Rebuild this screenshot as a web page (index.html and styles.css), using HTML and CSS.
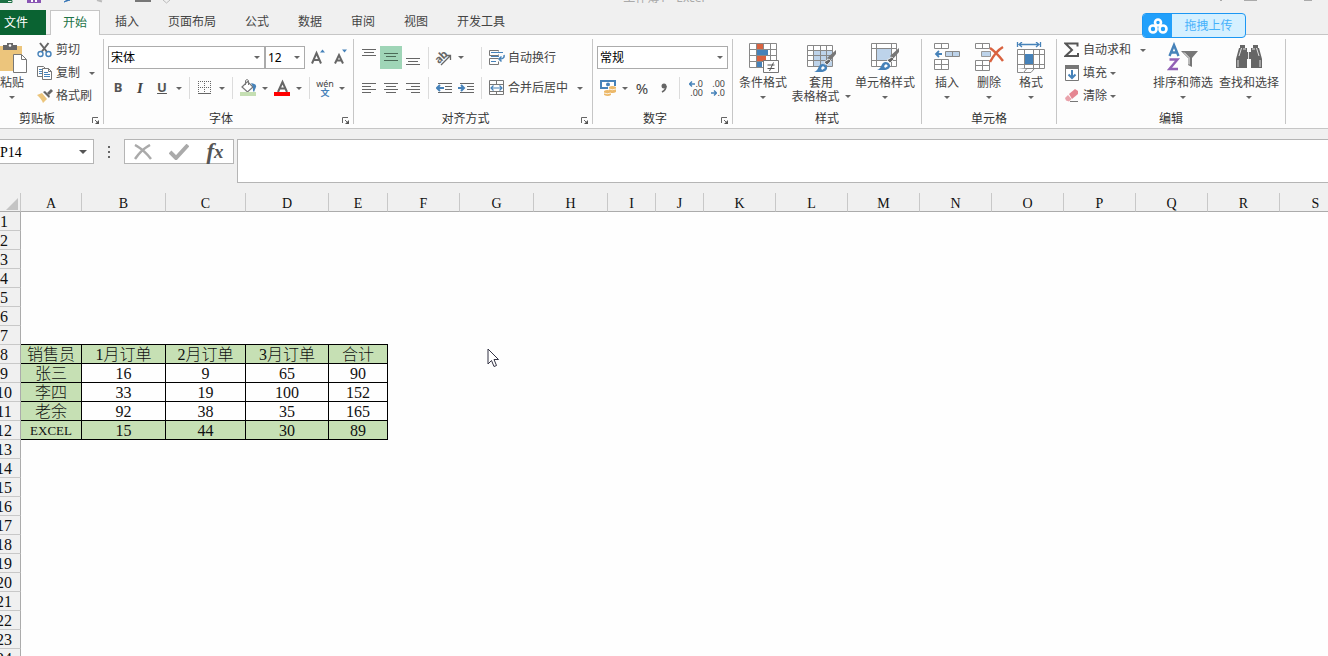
FILE: index.html
```html
<!DOCTYPE html>
<html lang="zh-CN">
<head>
    <meta charset="UTF-8">
    <meta name="viewport" content="width=device-width, initial-scale=1.0">
    <title>工作簿1 - Excel</title>
    <link rel="stylesheet" href="styles.css">
</head>
<body>
    <!-- Shared icons -->
    <svg class="symbols" aria-hidden="true">
        <symbol id="caret" viewBox="0 0 6 3"><path d="M0 0h6L3 3z" fill="#666"/></symbol>
        <symbol id="launch" viewBox="0 0 7 7"><path d="M.5 6V.5H6M3 3l3 3" fill="none" stroke="#666"/><path d="M7 3v4H3z" fill="#555"/></symbol>
        <symbol id="brush" viewBox="0 0 23 24">
            <path d="M22 0v4l-6 7-3-3z" fill="#777"/><path d="M15 9l2 2-4 4-3-3z" fill="#666" stroke="#fff" stroke-width=".7"/>
            <path d="M0 22c4-1 4-5 6-7s6-1 7 2-3 5-6 5z" fill="#4682b9"/><path d="M7 18l2-2 2 2-3 2z" fill="#fff"/>
        </symbol>
    </svg>

    <!-- Title bar -->
    <header class="titlebar">
        <div class="quick">
            <svg width="180" height="8" viewBox="0 0 180 8">
                <path d="M0 0h8v3H0z" fill="#1d7044"/><path d="M8 .5h4v2H8" fill="none" stroke="#1d7044"/>
                <path d="M27 0h14v3H27z" fill="#8a55b4"/><path d="M31 0h6v2h-6z" fill="#fff"/><path d="M33 0h2v2h-2z" fill="#8a55b4"/>
                <path d="M64 2l6-2h-3z" stroke="#3f7fc0"/><path d="M97 0l5 1.500" stroke="#bbb" stroke-width="2"/>
                <path d="M135 0h16v2h-16z" fill="#777"/><path d="M163 0l3.500 3L170 0" fill="none" stroke="#bbb"/>
            </svg>
        </div>
        <span class="doc-name">工作簿1 - Excel</span>
        <svg class="window-icons" width="108" height="8" viewBox="0 0 108 8"><path d="M0 .5h2M24 .5h13M84 .5h8" stroke="#aaa"/></svg>
    </header>

    <!-- Ribbon tabs -->
    <nav class="tabs">
        <button class="tab file">文件</button>
        <button class="tab active">开始</button>
        <button class="tab">插入</button>
        <button class="tab">页面布局</button>
        <button class="tab">公式</button>
        <button class="tab">数据</button>
        <button class="tab">审阅</button>
        <button class="tab">视图</button>
        <button class="tab">开发工具</button>
    </nav>

    <!-- Ribbon -->
    <div class="ribbon">
        <section class="group clipboard">
            <div class="group-body">
                <button class="big paste">
                    <svg width="32" height="32" viewBox="0 0 32 32">
                        <path d="M0 4h26v25H0z" fill="#ecc57c"/><path d="M7 3h4V1h6v2h4v5H7z" fill="#666"/><circle cx="14" cy="3.500" r="1.300" fill="#fff"/>
                        <path d="M17.500 12.500h8l5 5v13h-13z" fill="#fff" stroke="#777"/><path d="M25.500 12.500v5h5" fill="none" stroke="#777"/>
                    </svg>
                    <span>粘贴</span>
                    <svg class="caret"><use href="#caret"/></svg>
                </button>
                <div class="stack">
                    <button class="small">
                        <svg width="16" height="16" viewBox="0 0 16 16"><path d="M3 1l7 9M11.500 1l-7 9" stroke="#666" stroke-width="2"/><circle cx="3.500" cy="12" r="2.500" fill="none" stroke="#4682b9" stroke-width="1.400"/><circle cx="11.500" cy="12" r="2.500" fill="none" stroke="#4682b9" stroke-width="1.400"/></svg>
                        <span>剪切</span>
                    </button>
                    <button class="small">
                        <svg width="16" height="16" viewBox="0 0 16 16"><path d="M.5 1.500h6l2 2v8h-8z" fill="#fff" stroke="#777"/><path d="M2 4.500h4M2 6.500h4M2 8.500h4" stroke="#4682b9"/><path d="M5.500 3.500h6l3 3v8h-9z" fill="#fff" stroke="#777"/><path d="M11.500 3.500v3h3" fill="none" stroke="#777"/><path d="M7 7.500h4M7 9.500h6M7 11.500h6" stroke="#4682b9"/></svg>
                        <span>复制</span>
                        <svg class="caret far"><use href="#caret"/></svg>
                    </button>
                    <button class="small">
                        <svg width="16" height="16" viewBox="0 0 16 16"><path d="M0 7l5-2 5 6-4 4c-1-3-3-5-6-8z" fill="#ecc57c"/><path d="M6 4l6 6 1-2-5-5z" fill="#666"/><path d="M10 5l4-4 2 2-4 4z" fill="#666"/></svg>
                        <span>格式刷</span>
                    </button>
                </div>
            </div>
            <footer class="group-foot"><span>剪贴板</span><button class="launch" aria-label="剪贴板设置"><svg width="7" height="7"><use href="#launch"/></svg></button></footer>
        </section>

        <section class="group font">
            <div class="group-body rows">
                <div class="row">
                    <div class="combo font-name"><select aria-label="字体"><option>宋体</option></select><svg class="caret"><use href="#caret"/></svg></div>
                    <div class="combo font-size"><select aria-label="字号"><option>12</option></select><svg class="caret"><use href="#caret"/></svg></div>
                    <button class="tool" aria-label="增大字号"><svg width="16" height="18" viewBox="0 0 16 18"><path d="M2 14.500L6.500 4 11 14.500M3.500 11h6" fill="none" stroke="#666" stroke-width="2"/><path d="M10 3.500l2.500-3 2.500 3z" fill="#4682b9"/></svg></button>
                    <button class="tool" aria-label="减小字号"><svg width="16" height="18" viewBox="0 0 16 18"><path d="M3 14.500L7 6l4 8.500M4.500 11.500h5" fill="none" stroke="#666" stroke-width="2"/><path d="M10 .5h5l-2.500 3z" fill="#4682b9"/></svg></button>
                </div>
                <div class="row">
                    <button class="tool bold">B</button>
                    <button class="tool italic">I</button>
                    <button class="tool underline">U</button>
                    <button class="drop" aria-label="下划线选项"><svg class="caret"><use href="#caret"/></svg></button>
                    <i class="sep"></i>
                    <button class="tool" aria-label="边框"><svg width="14" height="14" viewBox="0 0 14 14"><path d="M0 .5h13M0 6.500h13M.5 0v12M6.500 0v12M12.500 0v12" stroke="#666" stroke-dasharray="1 1"/><path d="M0 12.500h13" stroke="#666"/></svg></button>
                    <button class="drop" aria-label="边框选项"><svg class="caret"><use href="#caret"/></svg></button>
                    <i class="sep"></i>
                    <button class="tool" aria-label="填充颜色"><svg width="18" height="18" viewBox="0 0 18 18"><path d="M3 8l5.500-5.500L14 8l-5.500 5z" fill="#fff" stroke="#777" stroke-width="1.200"/><path d="M6.500 6V1.500q1.500-2 3 0V6" fill="none" stroke="#777"/><path d="M12 4q6 1 5 4l-2 5q-1.500 0-1-5z" fill="#4682b9"/><path d="M1 13h16v4H1z" fill="#c5dfb3"/></svg></button>
                    <button class="drop" aria-label="填充颜色选项"><svg class="caret"><use href="#caret"/></svg></button>
                    <button class="tool" aria-label="字体颜色"><svg width="16" height="18" viewBox="0 0 16 18"><path d="M4 13L8.500 3 13 13M5.500 9.500h6" fill="none" stroke="#666" stroke-width="2"/><path d="M0 13h16v4H0z" fill="#f00"/></svg></button>
                    <button class="drop" aria-label="字体颜色选项"><svg class="caret"><use href="#caret"/></svg></button>
                    <i class="sep"></i>
                    <button class="tool pinyin"><span>wén</span><b>文</b></button>
                    <button class="drop" aria-label="拼音选项"><svg class="caret"><use href="#caret"/></svg></button>
                </div>
            </div>
            <footer class="group-foot"><span>字体</span><button class="launch" aria-label="字体设置"><svg width="7" height="7"><use href="#launch"/></svg></button></footer>
        </section>

        <section class="group align">
            <div class="group-body rows">
                <div class="row">
                    <button class="tool" aria-label="顶端对齐"><svg width="14" height="19" viewBox="0 0 14 19"><path d="M0 1.500h14M2 4.500h10M0 7.500h14" stroke="#666"/></svg></button>
                    <button class="tool pressed" aria-label="垂直居中"><svg width="14" height="19" viewBox="0 0 14 19"><path d="M0 5.500h14M2 8.500h10M0 12.500h14" stroke="#4b6b58"/></svg></button>
                    <button class="tool" aria-label="底端对齐"><svg width="14" height="19" viewBox="0 0 14 19"><path d="M0 10.500h14M2 13.500h10M0 16.500h14" stroke="#666"/></svg></button>
                    <i class="sep"></i>
                    <div class="pair">
                        <button class="tool" aria-label="方向"><svg width="18" height="18" viewBox="0 0 18 18"><text x="0" y="12" transform="rotate(-45 6 9)" class="ab">ab</text><path d="M6 16l9-9M11 6.500h4.500V11" fill="none" stroke="#666" stroke-width="1.300"/></svg></button>
                        <button class="drop" aria-label="方向选项"><svg class="caret"><use href="#caret"/></svg></button>
                    </div>
                    <i class="sep"></i>
                    <button class="small">
                        <svg width="16" height="16" viewBox="0 0 16 16"><path d="M9.500 1.500v-1h-9v5h9v-1M9.500 8.500h-9v6h9v-3" fill="none" stroke="#777"/><path d="M2 2.500h12M2 6.500h8M2 11.500h5" stroke="#4682b9"/><path d="M15 5q1 4-5 4M12.500 6.500L10 9l2.500 2.500" fill="none" stroke="#4682b9" stroke-width="1.500"/></svg>
                        <span>自动换行</span>
                    </button>
                </div>
                <div class="row">
                    <button class="tool" aria-label="左对齐"><svg width="14" height="12" viewBox="0 0 14 12"><path d="M0 1.500h14M0 4.500h9M0 7.500h14M0 10.500h9" stroke="#666"/></svg></button>
                    <button class="tool" aria-label="居中"><svg width="14" height="12" viewBox="0 0 14 12"><path d="M0 1.500h14M2 4.500h10M0 7.500h14M2 10.500h10" stroke="#666"/></svg></button>
                    <button class="tool" aria-label="右对齐"><svg width="14" height="12" viewBox="0 0 14 12"><path d="M0 1.500h14M5 4.500h9M0 7.500h14M5 10.500h9" stroke="#666"/></svg></button>
                    <i class="sep"></i>
                    <div class="pair">
                        <button class="tool" aria-label="减少缩进"><svg width="16" height="12" viewBox="0 0 16 12"><path d="M2 1.500h14M9 4.500h7M9 7.500h7M2 10.500h14" stroke="#666"/><path d="M8 6H1M4 3L1 6l3 3" fill="none" stroke="#4682b9" stroke-width="2"/></svg></button>
                        <button class="tool" aria-label="增加缩进"><svg width="16" height="12" viewBox="0 0 16 12"><path d="M2 1.500h14M9 4.500h7M9 7.500h7M2 10.500h14" stroke="#666"/><path d="M0 6h6M3 3l3 3-3 3" fill="none" stroke="#4682b9" stroke-width="2"/></svg></button>
                    </div>
                    <i class="sep"></i>
                    <button class="small">
                        <svg width="16" height="16" viewBox="0 0 16 16"><path d="M.5.5h14v14H.5zM.5 4.500h14M.5 11.500h14M7.500.5v4M7.500 11.500v3" fill="none" stroke="#777"/><path d="M2 8h11M4.500 5.500L2 8l2.500 2.500M10.500 5.500L13 8l-2.500 2.500" fill="none" stroke="#4682b9" stroke-width="1.200"/></svg>
                        <span>合并后居中</span>
                        <svg class="caret far"><use href="#caret"/></svg>
                    </button>
                </div>
            </div>
            <footer class="group-foot"><span>对齐方式</span><button class="launch" aria-label="对齐设置"><svg width="7" height="7"><use href="#launch"/></svg></button></footer>
        </section>

        <section class="group number">
            <div class="group-body rows">
                <div class="row">
                    <div class="combo number-format"><select aria-label="数字格式"><option>常规</option></select><svg class="caret"><use href="#caret"/></svg></div>
                </div>
                <div class="row">
                    <button class="tool" aria-label="会计数字格式"><svg width="16" height="16" viewBox="0 0 16 16"><path d="M0 0h16v9H0z" fill="#4682b9"/><path d="M2 2h12v5H2z" fill="#fff"/><circle cx="8" cy="4.500" r="2" fill="#4682b9"/><path d="M8 6h8v7H8zM3 10h9v6H3z" fill="#fff"/><path d="M9 7q3-2 7 0v5q-3 2-7 0zM4 11q3-2 7 0v4q-3 2-7 0z" fill="#ecb96a"/><path d="M9 9q3 1.500 7 0M4 13q3 1.500 7 0" fill="none" stroke="#fff" stroke-width=".8"/></svg></button>
                    <button class="drop" aria-label="会计格式选项"><svg class="caret"><use href="#caret"/></svg></button>
                    <button class="tool percent">%</button>
                    <button class="tool" aria-label="千位分隔样式"><svg width="8" height="12" viewBox="0 0 8 12"><circle cx="4" cy="4" r="2.500" fill="#666"/><path d="M6 4q0 4-4 6" fill="none" stroke="#666" stroke-width="1.600"/></svg></button>
                    <i class="sep"></i>
                    <button class="tool decimals"><span><svg width="6" height="6" viewBox="0 0 6 6"><path d="M6 3H1M3 .5L.5 3 3 5.500" fill="none" stroke="#4682b9" stroke-width="1.400"/></svg>.0</span><span>.00</span></button>
                    <button class="tool decimals"><span>.00</span><span><svg width="6" height="6" viewBox="0 0 6 6"><path d="M0 3h5M3 .5L5.500 3 3 5.500" fill="none" stroke="#4682b9" stroke-width="1.400"/></svg>.0</span></button>
                </div>
            </div>
            <footer class="group-foot"><span>数字</span><button class="launch" aria-label="数字设置"><svg width="7" height="7"><use href="#launch"/></svg></button></footer>
        </section>

        <section class="group styles">
            <div class="group-body">
                <button class="big">
                    <svg width="32" height="32" viewBox="0 0 32 32">
                        <path d="M2.500 1.500h27v24h-27zM2.500 7.500h27M2.500 13.500h27M2.500 19.500h27M9.500 1.500v24M16.500 1.500v24M23.500 1.500v24" fill="#fff" stroke="#888"/>
                        <path d="M10 2h6v5h-6zM10 14h9v5h-9z" fill="#d9623f"/><path d="M10 8h11v5H10zM10 20h5v5h-5z" fill="#4682b9"/>
                        <path d="M16.500 18.500h15v12h-15z" fill="#fff" stroke="#777"/><path d="M20.500 23h7M20.500 26.500h7M26.500 20.500l-4 8.500" stroke="#555" fill="none"/>
                    </svg>
                    <span>条件格式</span>
                    <svg class="caret"><use href="#caret"/></svg>
                </button>
                <button class="big">
                    <svg width="32" height="32" viewBox="0 0 32 32">
                        <path d="M2.500 3.500h25v21h-25z" fill="#fff"/><path d="M9 9h18v15H9z" fill="#bdd3ea"/>
                        <path d="M2.500 3.500h25v21h-25zM2.500 8.500h25M2.500 13.500h25M2.500 18.500h25M8.500 3.500v21M15.500 3.500v21M21.500 3.500v21" fill="none" stroke="#888"/>
                        <use href="#brush" x="9" y="8" width="23" height="24"/>
                    </svg>
                    <span>套用</span>
                    <span class="with-caret">表格格式<svg class="caret"><use href="#caret"/></svg></span>
                </button>
                <button class="big wide">
                    <svg width="32" height="32" viewBox="0 0 32 32">
                        <path d="M2.500 1.500h25v23h-25zM2.500 6.500h25M2.500 18.500h25M7.500 1.500v23M22.500 1.500v23" fill="#fff" stroke="#888"/>
                        <path d="M8 7h14v11H8z" fill="#bdd3ea"/>
                        <use href="#brush" x="8" y="6" width="23" height="24"/>
                    </svg>
                    <span>单元格样式</span>
                    <svg class="caret"><use href="#caret"/></svg>
                </button>
            </div>
            <footer class="group-foot"><span>样式</span></footer>
        </section>

        <section class="group cells">
            <div class="group-body">
                <button class="big">
                    <svg width="32" height="32" viewBox="0 0 32 32">
                        <path d="M3.500 1.500h14v5h-14zM10.500 1.500v5M3.500 17.500h14v10h-14zM3.500 22.500h14M10.500 17.500v10" fill="#fff" stroke="#888"/>
                        <path d="M14.500 9.500h14v5h-14zM21.500 9.500v5" fill="#bdd3ea" stroke="#888"/><path d="M11 12H5M8 9l-3 3 3 3" fill="none" stroke="#4682b9" stroke-width="1.800"/>
                    </svg>
                    <span>插入</span>
                    <svg class="caret"><use href="#caret"/></svg>
                </button>
                <button class="big">
                    <svg width="32" height="32" viewBox="0 0 32 32">
                        <path d="M2.500 1.500h14v5h-14zM9.500 1.500v5M2.500 18.500h14v10h-14zM2.500 23.500h14M9.500 18.500v10" fill="#fff" stroke="#888"/>
                        <path d="M8.500 9.500h9v5h-9z" fill="#bdd3ea" stroke="#999"/><path d="M17 6q6 4 13 13M30 5q-7 4-13 15" fill="none" stroke="#d9623f" stroke-width="2.500"/>
                    </svg>
                    <span>删除</span>
                    <svg class="caret"><use href="#caret"/></svg>
                </button>
                <button class="big">
                    <svg width="32" height="32" viewBox="0 0 32 32">
                        <path d="M2.500 0v5M25.500 0v5M4 2.500h20M7 0L4 2.500 7 5M21 0l3 2.500L21 5" fill="none" stroke="#4682b9" stroke-width="1.300"/>
                        <path d="M2.500 7.500h27v19h-27zM2.500 12.500h27M2.500 22.500h27M9.500 7.500v19M18.500 7.500v19M24.500 7.500v19" fill="#fff" stroke="#888"/>
                        <path d="M10 12h8v10h-8z" fill="#4682b9"/><path d="M2.500 26v4.500h6l3-3.500M9 30.500h7l3-3.500" fill="#fff" stroke="#888"/>
                    </svg>
                    <span>格式</span>
                    <svg class="caret"><use href="#caret"/></svg>
                </button>
            </div>
            <footer class="group-foot"><span>单元格</span></footer>
        </section>

        <section class="group editing">
            <div class="group-body">
                <div class="stack">
                    <button class="small">
                        <svg width="16" height="16" viewBox="0 0 16 16"><path d="M13.500 4.500V1.500H1.500L8 8l-6.500 6h12.500v-3" fill="none" stroke="#555" stroke-width="2"/></svg>
                        <span>自动求和</span>
                        <svg class="caret far"><use href="#caret"/></svg>
                    </button>
                    <button class="small">
                        <svg width="16" height="16" viewBox="0 0 16 16"><path d="M1.500.5h13v15h-13z" fill="#fff" stroke="#777"/><path d="M1 0h14v4H1z" fill="#777"/><path d="M8 5v8M4.500 9.500L8 13l3.500-3.500" fill="none" stroke="#4682b9" stroke-width="2"/></svg>
                        <span>填充</span>
                        <svg class="caret"><use href="#caret"/></svg>
                    </button>
                    <button class="small">
                        <svg width="16" height="16" viewBox="0 0 16 16"><path d="M5 6l6-5 3 2v3L8 11z" fill="#e58692"/><path d="M4 7l3.500 4L5 13.500 2 12.500 1 10z" fill="#e9a2ab"/><path d="M6 13.500h8" stroke="#777"/></svg>
                        <span>清除</span>
                        <svg class="caret"><use href="#caret"/></svg>
                    </button>
                </div>
                <button class="big">
                    <svg width="32" height="32" viewBox="0 0 32 32">
                        <path d="M2.500 14L7 3l4.500 11M4 10.500h6" fill="none" stroke="#4682b9" stroke-width="2.400"/><path d="M2.500 17.500h8l-8 9.500h8.500" fill="none" stroke="#9160b5" stroke-width="2.400"/>
                        <path d="M14 9h17l-6 7v9l-4-2v-7z" fill="#777"/><path d="M17 10.500l5 5v7" fill="none" stroke="#fff"/>
                    </svg>
                    <span>排序和筛选</span>
                    <svg class="caret"><use href="#caret"/></svg>
                </button>
                <button class="big">
                    <svg width="32" height="32" viewBox="0 0 32 32">
                        <path d="M7 3h5v3h2v4h4V6h2V3h5v3h1l3 11v9H18v-9h-4v9H3v-9L6 6h1z" fill="#666"/><path d="M6 14L8.500 6M26 14l-2.500-8M5 18v7M27 18v7M10 7h3M19 7h3M15.500 10v7" stroke="#fff" stroke-width=".8"/>
                    </svg>
                    <span>查找和选择</span>
                    <svg class="caret"><use href="#caret"/></svg>
                </button>
            </div>
            <footer class="group-foot"><span>编辑</span></footer>
        </section>
    </div>

    <!-- Formula bar -->
    <div class="formula-bar">
        <div class="name-box"><input type="text" value="P14" aria-label="名称框"><button aria-label="名称列表"><svg width="8" height="4"><path d="M0 0h8L4 4z" fill="#555"/></svg></button></div>
        <svg class="dots" width="2" height="12" viewBox="0 0 2 12"><path d="M0 1h2M0 6h2M0 11h2" stroke="#666" stroke-width="2"/></svg>
        <div class="formula-tools">
            <button aria-label="取消"><svg width="18" height="16" viewBox="0 0 18 16"><path d="M1 1q9 5 16 14M16 1Q7 6 1 15" fill="none" stroke="#aaa" stroke-width="2.500"/></svg></button>
            <button aria-label="输入"><svg width="20" height="16" viewBox="0 0 20 16"><path d="M1 8l6 6L19 1" fill="none" stroke="#aaa" stroke-width="4"/></svg></button>
            <button class="fx" aria-label="插入函数">f<small>x</small></button>
        </div>
        <input class="formula" type="text" aria-label="编辑栏">
    </div>

    <!-- Worksheet -->
    <main class="sheet">
        <table class="grid">
            <colgroup id="cols"></colgroup>
            <thead><tr id="letters"></tr></thead>
            <tbody id="rows"></tbody>
        </table>
    </main>

    <button class="upload">
        <span class="upload-icon"><svg width="20" height="16" viewBox="0 0 20 16"><g fill="none" stroke="#fff" stroke-width="2.600"><circle cx="10" cy="4.500" r="3"/><circle cx="5" cy="11" r="3.500"/><circle cx="15" cy="11" r="3.500"/></g></svg></span>
        <span class="upload-text">拖拽上传</span>
    </button>
    <svg class="pointer" width="13" height="20" viewBox="0 0 13 20"><path d="M1 1v15l3.500-3.500L7 18.500l2.500-1L7 11.500h4.500z" fill="#fff" stroke="#334"/></svg>

    <script src="script.js"></script>
</body>
</html>
```
FILE: styles.css
```css
* {
    box-sizing: border-box;
}

body {
    display: flex;
    flex-direction: column;
    height: 100vh;
    margin: 0;
    overflow: hidden;
    background-color: #f0f0f0;
    color: #444;
    font: 12px/16px "Noto Sans", "Noto Sans CJK SC", sans-serif;
}

button {
    display: flex;
    align-items: center;
    justify-content: center;
    padding: 0;
    border: 0;
    background: none;
    color: inherit;
    font: inherit;
    white-space: nowrap;
}

svg {
    flex: none;
    display: block;
}

.symbols {
    position: absolute;
    width: 0;
    height: 0;
}

.caret {
    width: 6px;
    height: 3px;
}

/* Title bar */
.titlebar {
    display: flex;
    flex: none;
    justify-content: space-between;
    height: 10px;
    overflow: hidden;
    color: #aaa;
}

.quick {
    width: 180px;
}

.doc-name {
    margin: -10px 0 0 -72px;
}

.window-icons {
    width: 108px;
}

/* Tabs */
.tabs {
    display: flex;
    flex: none;
    gap: 1px;
    height: 25px;
    border-bottom: 1px solid #c6c6c6;
}

.tab {
    height: 24px;
    padding: 0 14px;
}

.tab.file {
    width: 46px;
    height: 25px;
    margin-right: 3px;
    padding: 0 14px 0 0;
    background-color: #0a6332;
    color: #fff;
}

.tab.active {
    height: 25px;
    padding: 0 12px;
    border: 1px solid #c6c6c6;
    border-bottom: 0;
    background-color: #fdfdfd;
    color: #217346;
}

/* Ribbon */
.ribbon {
    display: flex;
    flex: none;
    padding: 4px 0;
    border-bottom: 1px solid #c6c6c6;
    background-color: #fdfdfd;
}

.group {
    display: flex;
    flex: none;
    flex-direction: column;
    height: 85px;
    border-right: 1px solid #c6c6c6;
}

.group-body {
    display: flex;
    flex: 1;
    align-items: flex-start;
}

.group-foot {
    display: flex;
    height: 12px;
    line-height: 14px;
    color: #333;
}

.group-foot span {
    flex: 1;
    text-align: center;
}

.launch {
    align-items: flex-end;
    width: 15px;
}

.clipboard {
    width: 118px;
    margin-left: -14px;
}

.font {
    width: 250px;
}

.align {
    width: 239px;
}

.number {
    width: 140px;
}

.styles {
    width: 189px;
}

.cells {
    width: 135px;
}

.editing {
    width: 229px;
}

.rows {
    flex-direction: column;
    gap: 8px;
    padding: 7px 4px 0;
}

.font .rows {
    padding-left: 3px;
}

.row {
    display: flex;
    height: 23px;
    align-items: center;
}

.row + .row {
    height: 22px;
}

.tool {
    width: 22px;
    height: 23px;
}

.row + .row .tool {
    height: 22px;
}

.drop {
    width: 12px;
    height: 22px;
}

.pressed {
    background-color: #9fd5b7;
}

.sep {
    width: 1px;
    height: 22px;
    margin: 0 4px;
    background-color: #dcdcdc;
}

.pair {
    display: flex;
    width: 44px;
}

.stack {
    display: flex;
    flex-direction: column;
    gap: 1px;
}

.small {
    justify-content: flex-start;
    gap: 3px;
    height: 22px;
    padding-left: 3px;
}

.small .far {
    margin-left: 6px;
}

.big {
    flex-direction: column;
    justify-content: flex-start;
    width: 58px;
    padding-top: 3px;
}

.big span {
    height: 15px;
    line-height: 18px;
}

.big > .caret {
    margin-top: 7px;
}

.with-caret {
    display: flex;
    align-items: center;
    gap: 5px;
}

.paste {
    width: 48px;
    padding-left: 4px;
}

.wide {
    width: 70px;
}

.styles .group-body {
    padding-left: 1px;
}

.cells .group-body {
    padding-left: 4px;
}

.cells .big {
    width: 42px;
}

.editing .stack {
    width: 93px;
    padding-left: 4px;
}

.editing .big {
    width: 66px;
}

.combo {
    display: flex;
    align-items: center;
    height: 23px;
    border: 1px solid #ababab;
    background-color: #fff;
}

.combo select {
    flex: 1;
    min-width: 0;
    height: 21px;
    padding: 0 2px;
    border: 0;
    appearance: none;
    background: none;
    color: #000;
    font: inherit;
}

.combo .caret {
    margin-right: 4px;
}

.font-name {
    width: 157px;
    margin-left: 1px;
}

.font-size {
    width: 40px;
    margin-right: 2px;
}

.number-format {
    width: 131px;
}

.bold,
.underline {
    padding-bottom: 2px;
    font-weight: bold;
    font-size: 13px;
    color: #555;
}

.underline {
    text-decoration: underline;
}

.italic {
    font: italic bold 15px/16px "Liberation Serif", serif;
}

.ab {
    fill: #666;
    font-size: 11px;
    font-weight: bold;
}

.pinyin {
    flex-direction: column;
    font-size: 9px;
    line-height: 9px;
}

.pinyin b {
    color: #4682b9;
}

.percent {
    font-size: 15px;
}

.decimals {
    flex-direction: column;
    align-items: flex-end;
    padding-right: 3px;
    font-size: 9px;
    line-height: 9px;
}

.decimals span {
    display: flex;
    align-items: center;
}

/* Formula bar */
.formula-bar {
    display: flex;
    flex: none;
    align-items: flex-start;
    padding: 10px 0;
}

.name-box {
    display: flex;
    width: 94px;
    height: 25px;
    border: 1px solid #b5b5b5;
    border-left: 0;
    background-color: #fff;
}

.name-box input {
    flex: 1;
    min-width: 0;
    padding: 2px 0 0;
    border: 0;
    background: none;
    color: #000;
    font: 14px/20px "Liberation Serif", serif;
}

.name-box button {
    width: 20px;
}

.dots {
    margin: 7px 14px 0;
}

.formula-tools {
    display: flex;
    width: 110px;
    height: 25px;
    border: 1px solid #b5b5b5;
    background-color: #fff;
}

.formula-tools button {
    flex: 1;
}

.formula-tools .fx {
    color: #555;
    font: italic bold 23px/20px "Liberation Serif", serif;
}

.fx small {
    font-size: 19px;
}

.formula {
    flex: 1;
    height: 44px;
    margin-left: 3px;
    border: 1px solid #b5b5b5;
    border-right: 0;
    background-color: #fff;
}

/* Worksheet */
.sheet {
    flex: 1;
    min-height: 0;
    margin-left: -12px;
    overflow: hidden;
}

.grid {
    width: 0;
    table-layout: fixed;
    border-collapse: separate;
    border-spacing: 0;
    background-color: #fefefe;
    color: #111;
    font: 300 16px/16px "Liberation Serif", "Noto Sans CJK SC", serif;
}

.grid th,
.grid td {
    height: 19px;
    padding: 2px 0 0;
    font-weight: 300;
    text-align: center;
    white-space: nowrap;
}

.grid thead th {
    padding-top: 3px;
    border-right: 1px solid #c8c8c8;
    border-bottom: 1px solid #ababab;
    background-color: #f0f0f0;
    font-size: 14px;
    line-height: 15px;
}

.grid tbody th {
    border-right: 1px solid #ababab;
    border-bottom: 1px solid #c8c8c8;
    background-color: #f0f0f0;
}

.corner svg {
    margin-left: 18px;
}

.grid .edge {
    border-bottom: 1px solid #000;
}

.grid .data {
    border-right: 1px solid #000;
    border-bottom: 1px solid #000;
}

.grid .filled {
    background-color: #c6e0b4;
}

.grid .latin {
    font-size: 13px;
}

/* Floating items */
.upload {
    position: absolute;
    top: 13px;
    right: 82px;
    width: 104px;
    height: 25px;
    overflow: hidden;
    border: 1px solid #1c97f3;
    border-radius: 4px;
    background-color: #d5f0ff;
    color: #46b1fb;
}

.upload-icon {
    display: flex;
    align-items: center;
    justify-content: center;
    width: 29px;
    height: 23px;
    background-color: #22a0fb;
}

.upload-text {
    flex: 1;
}

.pointer {
    position: absolute;
    top: 348px;
    left: 487px;
}
```
FILE: script.js
```js
const columnWidths = [33, 61, 84, 80, 83, 59, 72, 74, 74, 48, 48, 72, 72, 72, 72, 72, 72, 72, 72, 72];
const firstDataRow = 8;
const orders = [
    ["销售员", "1月订单", "2月订单", "3月订单", "合计"],
    ["张三", 16, 9, 65, 90],
    ["李四", 33, 19, 100, 152],
    ["老余", 92, 38, 35, 165],
    ["EXCEL", 15, 44, 30, 89]
];

let cols = "";
let letters = '<th class="corner"><svg width="12" height="12"><path d="M12 0v12H0z" fill="#c4c4c4"/></svg></th>';
columnWidths.forEach((width, i) => {
    cols += `<col style="width:${width}px">`;
    if (i > 0) {
        letters += `<th>${String.fromCharCode(64 + i)}</th>`;
    }
});
document.getElementById("cols").innerHTML = cols;
document.getElementById("letters").innerHTML = letters;

let rows = "";
for (let row = 1; row <= 24; row++) {
    const record = orders[row - firstDataRow];
    rows += `<tr><th>${row}</th>`;
    for (let col = 0; col < columnWidths.length - 1; col++) {
        let names = "";
        let value = "";
        if (record && col < record.length) {
            value = record[col];
            names = "data";
            // header row, first column and last row are shaded
            if (row === firstDataRow || col === 0 || record[0] === "EXCEL") {
                names += " filled";
            }
            if (value === "EXCEL") {
                names += " latin";
            }
        } else if (row === firstDataRow - 1 && col < 5) {
            names = "edge";
        }
        rows += `<td class="${names}">${value}</td>`;
    }
    rows += "</tr>";
}
document.getElementById("rows").innerHTML = rows;
```
